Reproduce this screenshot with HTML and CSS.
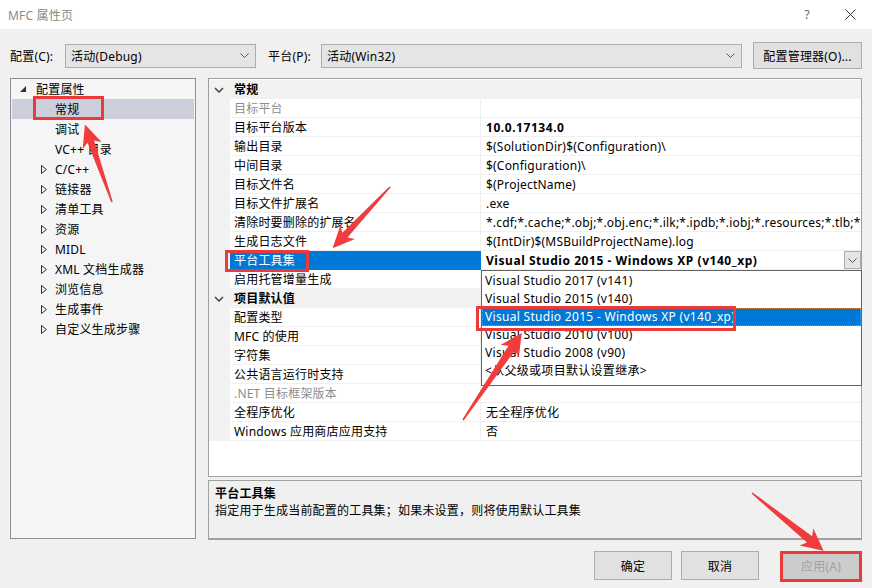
FILE: index.html
```html
<!DOCTYPE html>
<html>
<head>
    <meta charset="UTF-8">
    <title>MFC 属性页</title>
    <link rel="stylesheet" href="styles.css">
</head>
<body>
<header class="titlebar">
    <span class="title">MFC 属性页</span>
    <span class="help">?</span>
    <svg class="close" width="11" height="11" viewBox="0 0 11 11"><path d="M0.5 0.5L10.5 10.5M10.5 0.5L0.5 10.5" stroke="#333" stroke-width="1" fill="none"/></svg>
</header>

<div class="toolbar">
    <label class="lbl lbl-config">配置(C):</label>
    <div class="combo combo-config">
        <span>活动(Debug)</span>
        <svg width="9" height="5" viewBox="0 0 9 5"><polyline points="0.5,0.5 4.5,4.5 8.5,0.5" stroke="#555" fill="none"/></svg>
    </div>
    <label class="lbl lbl-platform">平台(P):</label>
    <div class="combo combo-platform">
        <span>活动(Win32)</span>
        <svg width="9" height="5" viewBox="0 0 9 5"><polyline points="0.5,0.5 4.5,4.5 8.5,0.5" stroke="#555" fill="none"/></svg>
    </div>
    <button class="btn btn-manager">配置管理器(O)...</button>
</div>

<main class="content">
    <ul class="tree">
        <li class="root"><span class="twisty"><svg width="6" height="6" viewBox="0 0 6 6"><polygon points="6,0 6,6 0,6" fill="#333"/></svg></span>配置属性</li>
        <li class="child sel"><span class="twisty"></span>常规</li>
        <li class="child"><span class="twisty"></span>调试</li>
        <li class="child"><span class="twisty"></span>VC++ 目录</li>
        <li class="child"><span class="twisty"><svg width="6" height="9" viewBox="0 0 6 9"><polygon points="0.5,0.5 5.5,4.5 0.5,8.5" stroke="#333" fill="none"/></svg></span>C/C++</li>
        <li class="child"><span class="twisty"><svg width="6" height="9" viewBox="0 0 6 9"><polygon points="0.5,0.5 5.5,4.5 0.5,8.5" stroke="#333" fill="none"/></svg></span>链接器</li>
        <li class="child"><span class="twisty"><svg width="6" height="9" viewBox="0 0 6 9"><polygon points="0.5,0.5 5.5,4.5 0.5,8.5" stroke="#333" fill="none"/></svg></span>清单工具</li>
        <li class="child"><span class="twisty"><svg width="6" height="9" viewBox="0 0 6 9"><polygon points="0.5,0.5 5.5,4.5 0.5,8.5" stroke="#333" fill="none"/></svg></span>资源</li>
        <li class="child"><span class="twisty"><svg width="6" height="9" viewBox="0 0 6 9"><polygon points="0.5,0.5 5.5,4.5 0.5,8.5" stroke="#333" fill="none"/></svg></span>MIDL</li>
        <li class="child"><span class="twisty"><svg width="6" height="9" viewBox="0 0 6 9"><polygon points="0.5,0.5 5.5,4.5 0.5,8.5" stroke="#333" fill="none"/></svg></span>XML 文档生成器</li>
        <li class="child"><span class="twisty"><svg width="6" height="9" viewBox="0 0 6 9"><polygon points="0.5,0.5 5.5,4.5 0.5,8.5" stroke="#333" fill="none"/></svg></span>浏览信息</li>
        <li class="child"><span class="twisty"><svg width="6" height="9" viewBox="0 0 6 9"><polygon points="0.5,0.5 5.5,4.5 0.5,8.5" stroke="#333" fill="none"/></svg></span>生成事件</li>
        <li class="child"><span class="twisty"><svg width="6" height="9" viewBox="0 0 6 9"><polygon points="0.5,0.5 5.5,4.5 0.5,8.5" stroke="#333" fill="none"/></svg></span>自定义生成步骤</li>
    </ul>

    <div class="right">
        <div class="grid">
            <div class="row cat">
                <span class="gutter"><svg width="10" height="6" viewBox="0 0 10 6"><polyline points="1,1 5,5 9,1" stroke="#444" stroke-width="1.5" fill="none"/></svg></span>
                <span class="cat-name">常规</span>
            </div>
            <div class="row"><span class="gutter"></span><span class="name off">目标平台</span><span class="value"></span></div>
            <div class="row"><span class="gutter"></span><span class="name">目标平台版本</span><span class="value bold">10.0.17134.0</span></div>
            <div class="row"><span class="gutter"></span><span class="name">输出目录</span><span class="value">$(SolutionDir)$(Configuration)\</span></div>
            <div class="row"><span class="gutter"></span><span class="name">中间目录</span><span class="value">$(Configuration)\</span></div>
            <div class="row"><span class="gutter"></span><span class="name">目标文件名</span><span class="value">$(ProjectName)</span></div>
            <div class="row"><span class="gutter"></span><span class="name">目标文件扩展名</span><span class="value">.exe</span></div>
            <div class="row"><span class="gutter"></span><span class="name">清除时要删除的扩展名</span><span class="value">*.cdf;*.cache;*.obj;*.obj.enc;*.ilk;*.ipdb;*.iobj;*.resources;*.tlb;*.tli;*.tlh;*.tmp;*.rsp;*.pgc;*.pgd</span></div>
            <div class="row"><span class="gutter"></span><span class="name">生成日志文件</span><span class="value">$(IntDir)$(MSBuildProjectName).log</span></div>
            <div class="row"><span class="gutter"></span><span class="name sel">平台工具集</span><span class="value bold edit"><span class="val-text">Visual Studio 2015 - Windows XP (v140_xp)</span><span class="drop-btn"><svg width="9" height="5" viewBox="0 0 9 5"><polyline points="0.5,0.5 4.5,4.5 8.5,0.5" stroke="#555" fill="none"/></svg></span></span></div>
            <div class="row"><span class="gutter"></span><span class="name">启用托管增量生成</span><span class="value"></span></div>
            <div class="row cat">
                <span class="gutter"><svg width="10" height="6" viewBox="0 0 10 6"><polyline points="1,1 5,5 9,1" stroke="#444" stroke-width="1.5" fill="none"/></svg></span>
                <span class="cat-name">项目默认值</span>
            </div>
            <div class="row"><span class="gutter"></span><span class="name">配置类型</span><span class="value"></span></div>
            <div class="row"><span class="gutter"></span><span class="name">MFC 的使用</span><span class="value"></span></div>
            <div class="row"><span class="gutter"></span><span class="name">字符集</span><span class="value"></span></div>
            <div class="row"><span class="gutter"></span><span class="name">公共语言运行时支持</span><span class="value"></span></div>
            <div class="row"><span class="gutter"></span><span class="name off">.NET 目标框架版本</span><span class="value"></span></div>
            <div class="row"><span class="gutter"></span><span class="name">全程序优化</span><span class="value">无全程序优化</span></div>
            <div class="row"><span class="gutter"></span><span class="name">Windows 应用商店应用支持</span><span class="value">否</span></div>
        </div>
        <div class="desc">
            <p class="desc-title">平台工具集</p>
            <p>指定用于生成当前配置的工具集；如果未设置，则将使用默认工具集</p>
        </div>
    </div>
</main>

<footer class="footer">
    <button class="btn btn-ok">确定</button>
    <button class="btn btn-cancel">取消</button>
    <button class="btn btn-apply" disabled>应用(A)</button>
</footer>

<!-- open toolset list -->
<ul class="dropdown">
    <li>Visual Studio 2017 (v141)</li>
    <li>Visual Studio 2015 (v140)</li>
    <li class="hot">Visual Studio 2015 - Windows XP (v140_xp)</li>
    <li>Visual Studio 2010 (v100)</li>
    <li>Visual Studio 2008 (v90)</li>
    <li>&lt;从父级或项目默认设置继承&gt;</li>
</ul>

<!-- red annotation marks -->
<div class="mark mark-tree"></div>
<div class="mark mark-name"></div>
<div class="mark mark-item"></div>
<div class="mark mark-apply"></div>

<svg class="arrows" width="872" height="588" viewBox="0 0 872 588">
    <polygon transform="translate(112,202) rotate(-109.3)" points="0,-0.8 64,-3.5 60,-10 82,0 60,10 64,3.5 0,0.8"/>
    <polygon transform="translate(390,187) rotate(133.1)" points="0,-0.8 66,-3.5 62,-10 84,0 62,10 66,3.5 0,0.8"/>
    <polygon transform="translate(463,420) rotate(-55.9)" points="0,-0.8 87,-4 83,-11 105,0 83,11 87,4 0,0.8"/>
    <polygon transform="translate(752,493) rotate(38.9)" points="0,-0.8 74,-4 70,-11 92,0 70,11 74,4 0,0.8"/>
</svg>
</body>
</html>
```

FILE: styles.css
```css
* {
    margin: 0;
    padding: 0;
    box-sizing: border-box;
    list-style: none;
}

body {
    width: 872px;
    height: 588px;
    overflow: hidden;
    position: relative;
    background: #f0f0f0;
    font-family: "Noto Sans", "Noto Sans CJK SC", sans-serif;
    font-size: 12px;
    letter-spacing: 0.2px;
    color: #000;
}

/* title bar */
.titlebar {
    height: 29px;
    background: #FFFFFF;
    display: flex;
    align-items: center;
    padding-left: 8px;
}
.titlebar > .title {
    flex-grow: 1;
    color: #8a8a8a;
}
.titlebar > .help {
    color: #666;
    margin-right: 35px;
}
.titlebar > .close {
    margin-right: 16px;
}

/* config / platform row */
.toolbar {
    height: 27px;
    margin-top: 13px;
    padding-left: 10px;
    display: flex;
    align-items: center;
}
.lbl-config {
    width: 55px;
}
.lbl-platform {
    width: 53px;
    margin-left: 12px;
}
.combo {
    height: 24px;
    background: #e5e5e5;
    border: 1px solid #adadad;
    display: flex;
    align-items: center;
    justify-content: space-between;
    padding: 0 6px 0 5px;
}
.combo-config {
    width: 191px;
}
.combo-platform {
    width: 421px;
}
.btn {
    font: inherit;
    letter-spacing: inherit;
    color: #000;
    background: #e1e1e1;
    border: 1px solid #adadad;
}
.btn-manager {
    width: 109px;
    height: 27px;
    margin-left: 11px;
}

/* main area */
.content {
    display: flex;
    margin-top: 9px;
    padding-left: 10px;
}
.tree {
    width: 186px;
    height: 461px;
    background: #f5f5f5;
    border: 1px solid #8e8f94;
    padding: 0 1px;
}
.tree > li {
    height: 20px;
    display: flex;
    align-items: center;
    white-space: nowrap;
}
.tree > li.root {
    padding-left: 8px;
}
.tree > li.root > .twisty {
    width: 16px;
}
.tree > li.child {
    padding-left: 29px;
}
.tree > li.child > .twisty {
    width: 14px;
}
.tree > li > .twisty {
    display: flex;
    align-items: center;
    height: 100%;
}
.tree > li.sel {
    background: #cccedb;
}

.right {
    width: 654px;
    margin-left: 12px;
}
.grid {
    height: 399px;
    background: #FFFFFF;
    border: 1px solid #a0a0a0;
    padding-top: 1px;
    overflow: hidden;
}
.row {
    height: 19px;
    line-height: 19px;
    display: flex;
}
.row > .gutter {
    width: 21px;
    flex-shrink: 0;
    background: #f2f2f2;
    display: flex;
    align-items: center;
    padding-left: 5px;
}
.row > .name {
    width: 251px;
    flex-shrink: 0;
    padding-left: 4px;
    border-bottom: 1px solid #f0f0f0;
    border-right: 1px solid #f0f0f0;
    overflow: hidden;
    white-space: nowrap;
}
.row > .name.off {
    color: #8d8d8d;
}
.row > .name.sel {
    background: #0078d7;
    color: #FFFFFF;
    border-color: #0078d7;
}
.row > .value {
    flex-grow: 1;
    padding-left: 5px;
    border-bottom: 1px solid #f0f0f0;
    overflow: hidden;
    white-space: nowrap;
}
.row.cat {
    background: #f2f2f2;
}
.row.cat > .cat-name {
    padding-left: 4px;
    font-weight: bold;
}
.bold {
    font-weight: bold;
    letter-spacing: 0.55px;
}
.value.edit {
    display: flex;
    padding-right: 0;
}
.value.edit > .val-text {
    flex-grow: 1;
}
.drop-btn {
    width: 17px;
    height: 18px;
    background: #e5e5e5;
    border: 1px solid #acacac;
    display: flex;
    align-items: center;
    justify-content: center;
}

.desc {
    height: 60px;
    margin-top: 3px;
    border: 1px solid #a0a0a0;
    border-bottom: 2px solid #a0a0a0;
    padding: 4px 6px;
    line-height: 17px;
}
.desc > .desc-title {
    font-weight: bold;
}

/* bottom buttons */
.footer {
    display: flex;
    justify-content: flex-end;
    margin-top: 11px;
    padding-right: 12px;
}
.footer > .btn {
    width: 78px;
    height: 29px;
}
.btn-cancel {
    margin-left: 9px;
}
.btn-apply {
    margin-left: 23px;
    background: #cccccc;
    border-color: #bfbfbf;
    color: #a0a0a0;
}

/* open list */
.dropdown {
    position: absolute;
    left: 481px;
    top: 270px;
    width: 381px;
    height: 116px;
    background: #FFFFFF;
    border: 1px solid #646464;
    padding-top: 1px;
    letter-spacing: 0.3px;
}
.dropdown > li {
    height: 18px;
    line-height: 18px;
    padding-left: 3px;
    white-space: nowrap;
}
.dropdown > li.hot {
    background: #0078d7;
    color: #FFFFFF;
    outline: 1px dotted #d08a30;
    outline-offset: -1px;
}

/* annotations */
.mark {
    position: absolute;
    border: 3px solid #ea3a3a;
}
.mark-tree {
    left: 33px;
    top: 96px;
    width: 71px;
    height: 24px;
}
.mark-name {
    left: 225px;
    top: 250px;
    width: 84px;
    height: 22px;
}
.mark-item {
    left: 476px;
    top: 306px;
    width: 260px;
    height: 25px;
}
.mark-apply {
    left: 780px;
    top: 551px;
    width: 82px;
    height: 31px;
}
.arrows {
    position: absolute;
    left: 0;
    top: 0;
    fill: #f03c3c;
}
```
